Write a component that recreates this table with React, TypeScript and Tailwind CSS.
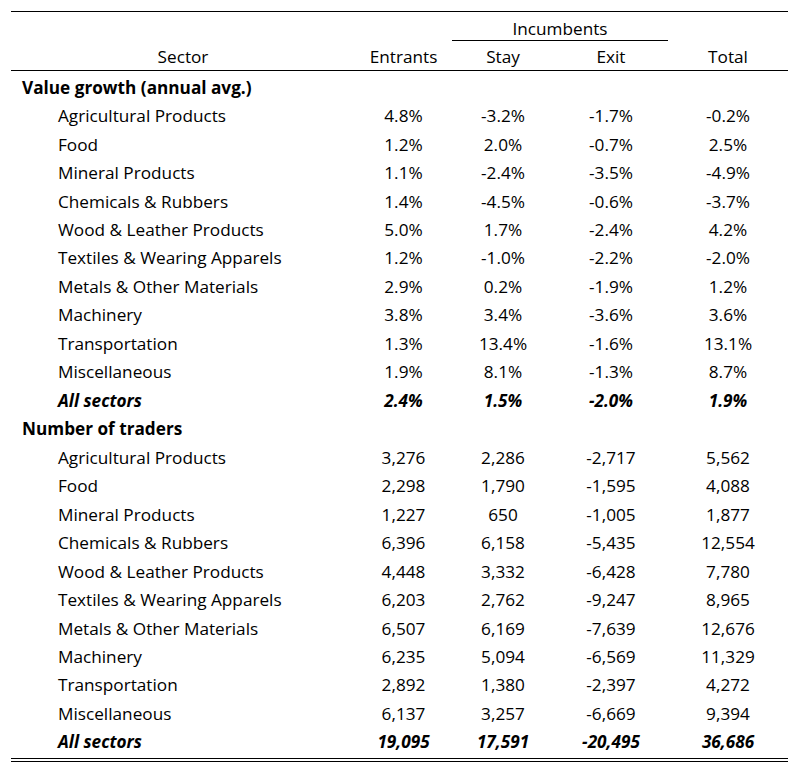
import React from 'react';

const sectors = [
  'Agricultural Products',
  'Food',
  'Mineral Products',
  'Chemicals & Rubbers',
  'Wood & Leather Products',
  'Textiles & Wearing Apparels',
  'Metals & Other Materials',
  'Machinery',
  'Transportation',
  'Miscellaneous',
];

const growth = [
  ['4.8%', '-3.2%', '-1.7%', '-0.2%'],
  ['1.2%', '2.0%', '-0.7%', '2.5%'],
  ['1.1%', '-2.4%', '-3.5%', '-4.9%'],
  ['1.4%', '-4.5%', '-0.6%', '-3.7%'],
  ['5.0%', '1.7%', '-2.4%', '4.2%'],
  ['1.2%', '-1.0%', '-2.2%', '-2.0%'],
  ['2.9%', '0.2%', '-1.9%', '1.2%'],
  ['3.8%', '3.4%', '-3.6%', '3.6%'],
  ['1.3%', '13.4%', '-1.6%', '13.1%'],
  ['1.9%', '8.1%', '-1.3%', '8.7%'],
];

const traders = [
  ['3,276', '2,286', '-2,717', '5,562'],
  ['2,298', '1,790', '-1,595', '4,088'],
  ['1,227', '650', '-1,005', '1,877'],
  ['6,396', '6,158', '-5,435', '12,554'],
  ['4,448', '3,332', '-6,428', '7,780'],
  ['6,203', '2,762', '-9,247', '8,965'],
  ['6,507', '6,169', '-7,639', '12,676'],
  ['6,235', '5,094', '-6,569', '11,329'],
  ['2,892', '1,380', '-2,397', '4,272'],
  ['6,137', '3,257', '-6,669', '9,394'],
];

export default function App() {
  return (
    <div className="min-h-screen bg-white text-black pt-[11px] pl-[11px]" style={{ fontFamily: '"Open Sans", "Noto Sans", sans-serif' }}>
      <div className="w-[777px] text-[17.2px] leading-none">
        {/* Header */}
        <div className="border-t border-black">
          <div className="flex h-[29px]">
            <div className="w-[441px]" />
            <div className="w-[216px] flex flex-col">
              <div className="flex-1 flex items-center justify-center pt-[5px]">Incumbents</div>
              <div className="border-b border-black" />
            </div>
          </div>
          <div className="flex h-[30px] items-center border-b border-black">
            <HeadCell className="w-[344px]">Sector</HeadCell>
            <HeadCell className="w-[97px]">Entrants</HeadCell>
            <HeadCell className="w-[102px]">Stay</HeadCell>
            <HeadCell className="w-[114px]">Exit</HeadCell>
            <HeadCell className="w-[120px]">Total</HeadCell>
          </div>
        </div>

        {/* Body */}
        <div className="pt-[3px]">
          <SectionTitle>Value growth (annual avg.)</SectionTitle>
          {sectors.map((s, i) => (
            <Row key={s} label={s} values={growth[i]} />
          ))}
          <Row label="All sectors" values={['2.4%', '1.5%', '-2.0%', '1.9%']} total />
          <SectionTitle>Number of traders</SectionTitle>
          {sectors.map((s, i) => (
            <Row key={s} label={s} values={traders[i]} />
          ))}
          <Row label="All sectors" values={['19,095', '17,591', '-20,495', '36,686']} total />
        </div>

        {/* Double rule */}
        <div className="border-t border-black mt-[1px]" />
        <div className="border-t border-black mt-[2px]" />
      </div>
    </div>
  );
}

function HeadCell({ className, children }: { className: string; children: React.ReactNode }) {
  return <div className={`${className} text-center pt-[2px]`}>{children}</div>;
}

function SectionTitle({ children }: { children: React.ReactNode }) {
  return <div className="h-[28.48px] flex items-center pb-[2px] pl-[11px] font-bold">{children}</div>;
}

function Row({ label, values, total }: { label: string; values: string[]; total?: boolean }) {
  const widths = ['w-[97px]', 'w-[102px]', 'w-[114px]', 'w-[120px]'];
  return (
    <div className={`h-[28.48px] flex items-center pb-[2px] ${total ? 'font-bold italic' : ''}`}>
      <div className="w-[344px] pl-[47px]">{label}</div>
      {values.map((v, i) => (
        <div key={i} className={`${widths[i]} text-center`}>{v}</div>
      ))}
    </div>
  );
}
